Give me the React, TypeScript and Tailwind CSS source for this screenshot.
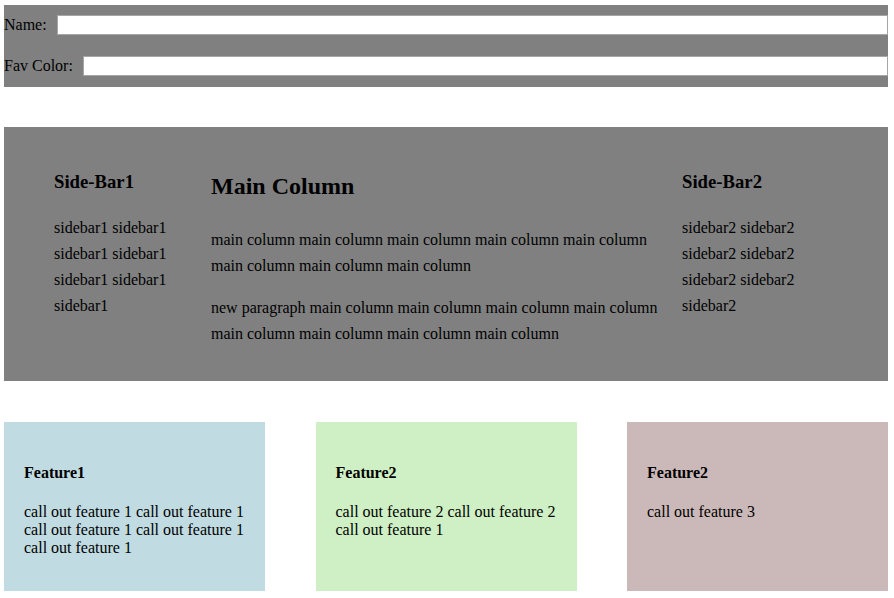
const Sidebar = ({ title, lines }: { title: string; lines: string }) => (
  <div className="w-[157px] shrink-0 pt-[44px] pr-[10px]">
    <h3 className="text-[18.72px] font-bold leading-[22px]">{title}</h3>
    <p className="mt-[22px] text-base leading-[26px]">{lines}</p>
  </div>
);

const Feature = ({ title, text, bg }: { title: string; text: string; bg: string }) => (
  <div className={`w-[261px] h-[169px] px-5 pt-[42px] ${bg}`}>
    <h4 className="text-base font-bold leading-[18px]">{title}</h4>
    <p className="mt-[21px] text-base leading-[18px]">{text}</p>
  </div>
);

export default function App() {
  return (
    <div
      className="min-h-screen bg-white text-black pl-[4px] pr-[6px] pt-[5px]"
      style={{ fontFamily: '"Liberation Serif", "Times New Roman", serif' }}
    >
      <form className="bg-[#808080] pt-[10px] pb-[11px] flex flex-col gap-[21px]">
        <div className="flex items-center h-[20px]">
          <label className="text-base leading-[18px] mr-[10px]">Name:</label>
          <input className="flex-1 h-[20px] bg-white border border-[#a6a6a6] outline-none" />
        </div>
        <div className="flex items-center h-[20px]">
          <label className="text-base leading-[18px] mr-[10px]">Fav Color:</label>
          <input className="flex-1 h-[20px] bg-white border border-[#a6a6a6] outline-none" />
        </div>
      </form>

      <div className="mt-[40px] h-[254px] bg-[#808080] px-[50px] flex items-start">
        <Sidebar
          title="Side-Bar1"
          lines="sidebar1 sidebar1 sidebar1 sidebar1 sidebar1 sidebar1 sidebar1"
        />
        <div className="w-[471px] shrink-0 pt-[45px] pr-[12px]">
          <h2 className="text-2xl font-bold leading-[28px]">Main Column</h2>
          <p className="mt-[27px] text-base leading-[26px]">
            main column main column main column main column main column main column main
            column main column
          </p>
          <p className="mt-[16px] text-base leading-[26px]">
            new paragraph main column main column main column main column main column main
            column main column main column
          </p>
        </div>
        <Sidebar
          title="Side-Bar2"
          lines="sidebar2 sidebar2 sidebar2 sidebar2 sidebar2 sidebar2 sidebar2"
        />
      </div>

      <div className="mt-[41px] flex justify-between">
        <Feature
          title="Feature1"
          text="call out feature 1 call out feature 1 call out feature 1 call out feature 1 call out feature 1"
          bg="bg-[#c1dbe2]"
        />
        <Feature
          title="Feature2"
          text="call out feature 2 call out feature 2 call out feature 1"
          bg="bg-[#cff0c5]"
        />
        <Feature title="Feature2" text="call out feature 3" bg="bg-[#cbb9b9]" />
      </div>
    </div>
  );
}
